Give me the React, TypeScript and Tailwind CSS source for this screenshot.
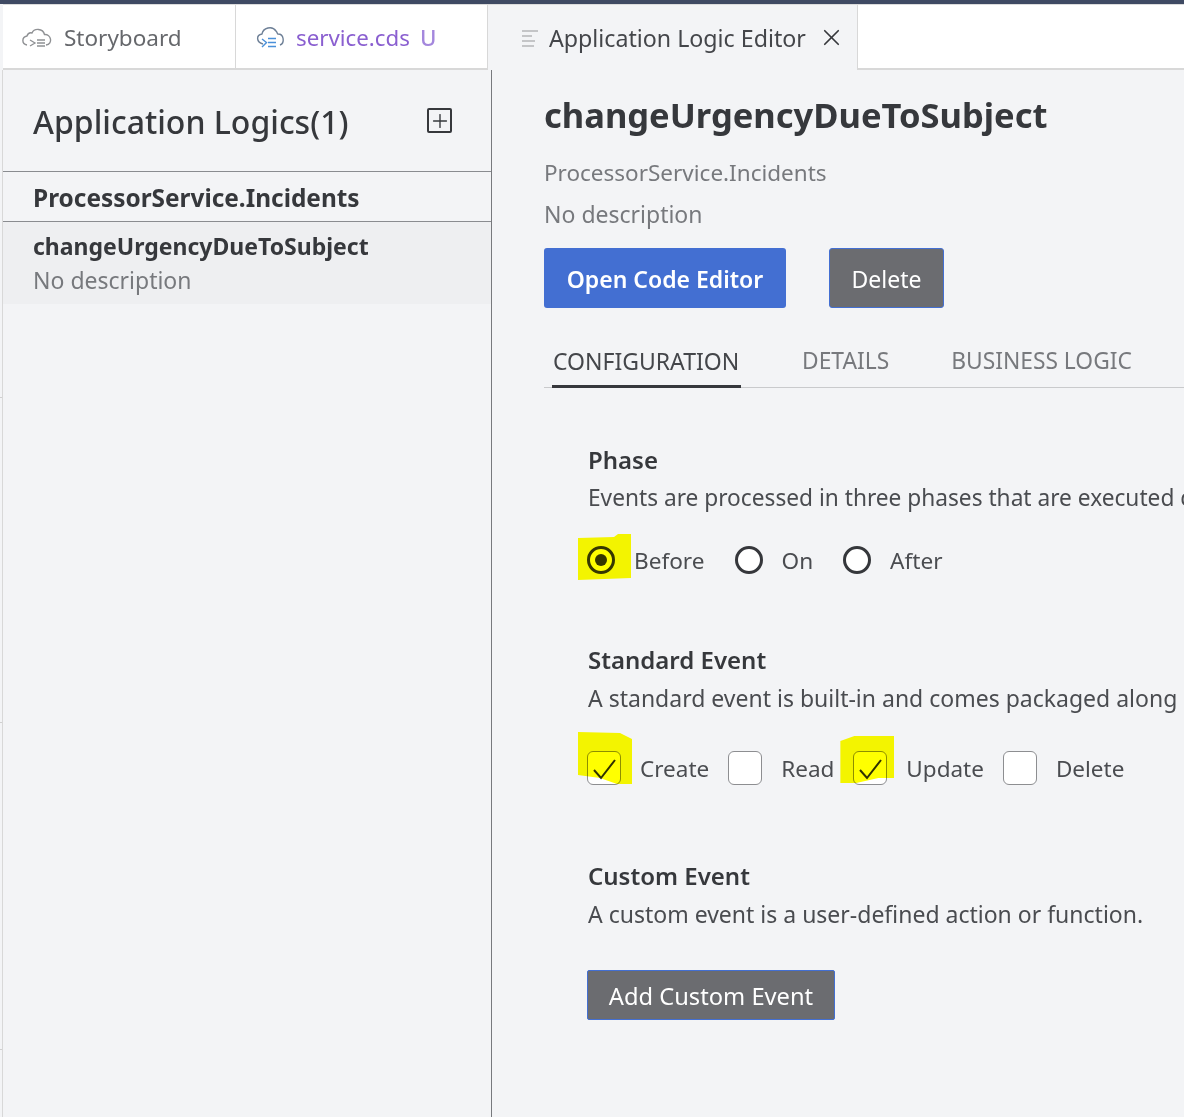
import { Plus, X } from "lucide-react";

const font = "font-['Noto_Sans','Open_Sans',sans-serif]";

/* ───────── Tab icons ───────── */
const StoryboardIcon = () => (
    <svg width="32" height="24" viewBox="0 0 32 24" fill="none" stroke="#8f9194">
        <path
            d="M6 20 C0.5 19 0.5 12 6 11 C7 8 9 7.5 11 8 C13 3 22 3 23.5 9.5 C30 9 32.5 19 25 20"
            strokeWidth="1.4"
        />
        <path d="M9 15 L14 18 L9 21" strokeWidth="1.3" />
        <path d="M16 15 H24 M16 18 H24 M16 21 H24" strokeWidth="1.5" />
    </svg>
);

const ServiceIcon = () => (
    <svg width="32" height="24" viewBox="0 0 32 24" fill="none">
        <path
            d="M7 19 C0 17 0 10 6 9 C7 3 16 0 20 6 C21.5 7.5 21 8.5 22 9 C28 9 29 18 24 20"
            stroke="#6d7f96"
            strokeWidth="1.4"
        />
        <path d="M6 14 L10.5 17.5 L6 22" stroke="#4a90d9" strokeWidth="1.4" />
        <path d="M12 13.5 H20 M12 17.5 H20 M12 21.5 H20" stroke="#4a90d9" strokeWidth="1.6" />
    </svg>
);

const LinesIcon = () => (
    <svg width="18" height="18" viewBox="0 0 18 18" fill="none" stroke="#c4c5c7" strokeWidth="2">
        <path d="M1 2 H17 M1 7 H11 M1 12 H14 M1 17 H13" />
    </svg>
);

/* ───────── Form controls ───────── */
const Radio = ({ label, checked, highlight }: { label: string; checked?: boolean; highlight?: boolean }) => (
    <div className="relative flex items-center gap-[19px]">
        {highlight && (
            <span className="absolute left-[-9px] top-[-12px] z-10 h-[46px] w-[53px] bg-[#ffff00] mix-blend-multiply [clip-path:polygon(0_4px,36px_3px,40px_0,100%_0,100%_44px,0_100%)]" />
        )}
        <span className="flex h-[28px] w-[28px] items-center justify-center rounded-full border-[3px] border-[#35373b] bg-white">
            {checked && <span className="h-[12px] w-[12px] rounded-full bg-[#35373b]" />}
        </span>
        <span className="pt-[2px] text-[22.6px] leading-[26px] text-[#4a4c50]">{label}</span>
    </div>
);

const Check = ({ label, checked, mark }: { label: string; checked?: boolean; mark?: "left" | "right" }) => (
    <div className="relative flex items-center gap-[19px]">
        {mark === "left" && (
            <span className="absolute left-[-9px] top-[-19px] z-10 h-[52px] w-[54px] bg-[#ffff00] mix-blend-multiply [clip-path:polygon(0_0,42px_1px,100%_7px,100%_100%,39px_100%,22px_46px,0_43px)]" />
        )}
        {mark === "right" && (
            <span className="absolute left-[-13px] top-[-15px] z-10 h-[47px] w-[54px] bg-[#ffff00] mix-blend-multiply [clip-path:polygon(0_5px,14px_0,100%_0,100%_42px,38px_42px,16px_100%,0_100%)]" />
        )}
        <span className="flex h-[34px] w-[34px] items-center justify-center rounded-[6px] border border-[#8d8e91] bg-white">
            {checked && (
                <svg width="26" height="26" viewBox="0 0 26 26" fill="none" stroke="#2f3135" strokeWidth="2">
                    <path d="M3 15 L10 23 L24 5" />
                </svg>
            )}
        </span>
        <span className="pt-[2px] text-[22.5px] leading-[32px] text-[#4a4c50]">{label}</span>
    </div>
);

const SectionText = ({ title, desc, tight }: { title: string; desc: string; tight?: boolean }) => (
    <div>
        <h3 className="text-[24px] font-semibold leading-[34px] text-[#36383c]">{title}</h3>
        <p
            className={
                tight
                    ? "mt-[4px] whitespace-nowrap text-[22.7px] leading-[34px] text-[#4a4c50]"
                    : "mt-[4px] whitespace-nowrap text-[23px] leading-[34px] text-[#4a4c50]"
            }
        >
            {desc}
        </p>
    </div>
);

export default function App() {
    return (
        <div className={`${font} relative h-[1117px] w-[1184px] overflow-hidden bg-[#f3f4f6]`}>
            <div className="h-1 bg-[#3f4a63]" />

            {/* Tab strip */}
            <div className="ml-[3px] flex h-[66px] border-t border-[#dcdcdc]">
                <div className="flex w-[233px] items-center gap-[11px] border-r border-b-2 border-[#d8d8d8] bg-white pl-[18px] text-[22.5px] text-[#66686c]">
                    <StoryboardIcon />
                    <span className="pt-[2px]">Storyboard</span>
                </div>
                <div className="flex w-[252px] items-center gap-[8px] border-r border-b-2 border-[#d8d8d8] bg-white pl-[20px] text-[22.3px] text-[#8a5fd0]">
                    <ServiceIcon />
                    <span className="pt-[2px]">service.cds</span>
                    <span className="ml-[2px] pt-[2px] font-medium text-[#a487dd]">U</span>
                </div>
                <div className="flex w-[370px] items-center border-r border-[#d8d8d8] pl-[33px] text-[23.2px] text-[#44464a]">
                    <LinesIcon />
                    <span className="ml-[10px] pt-[2px]">Application Logic Editor</span>
                    <X size={27} strokeWidth={1.5} className="ml-[12px] text-[#36383c]" />
                </div>
                <div className="flex-1 border-b-2 border-[#d8d8d8] bg-white" />
            </div>

            <div className="flex h-[1047px]">
                {/* Application logics list */}
                <aside className="ml-[2px] w-[490px] shrink-0 border-r border-l border-[#77797d] border-l-[#d8d8d8]">
                    <div className="flex h-[102px] items-start justify-between border-b border-[#8a8c90] pr-[39px] pl-[30px]">
                        <h2 className="mt-[29px] text-[32px] leading-[46px] font-medium text-[#36383c]">
                            Application Logics(1)
                        </h2>
                        <span className="mt-[38px] flex h-[25px] w-[25px] items-center justify-center rounded-[2px] border-2 border-[#36383c]">
                            <Plus size={22} strokeWidth={1.5} className="shrink-0 text-[#36383c]" />
                        </span>
                    </div>
                    <div className="flex h-[50px] items-center border-b border-[#8a8c90] pt-[3px] pl-[30px] text-[24.4px] font-bold text-[#36383c]">
                        ProcessorService.Incidents
                    </div>
                    <div className="h-[82px] bg-[#eeeff1] pt-[7px] pl-[30px]">
                        <div className="text-[23px] leading-[34px] font-bold text-[#36383c]">
                            changeUrgencyDueToSubject
                        </div>
                        <div className="text-[23px] leading-[34px] text-[#77797d]">No description</div>
                    </div>
                </aside>

                {/* Logic detail */}
                <main className="min-w-0 flex-1 overflow-hidden pl-[52px]">
                    <h1 className="mt-[20px] text-[34.5px] leading-[50px] font-bold whitespace-nowrap text-[#36383c]">
                        changeUrgencyDueToSubject
                    </h1>
                    <p className="mt-[16px] text-[22.5px] leading-[34px] text-[#77797d]">ProcessorService.Incidents</p>
                    <p className="mt-[7px] text-[23px] leading-[34px] text-[#77797d]">No description</p>

                    <div className="mt-[17px] flex gap-[43px]">
                        <button className="h-[60px] w-[242px] rounded-[3px] bg-[#436fd2] pt-[2px] text-[23px] font-semibold text-white">
                            Open Code Editor
                        </button>
                        <button className="h-[60px] w-[115px] rounded-[3px] border border-[#436fd2] bg-[#6b6c70] pt-[2px] text-[23px] text-white">
                            Delete
                        </button>
                    </div>

                    {/* Tabs */}
                    <div className="mt-[20px] flex h-[60px] border-b border-[#c9cacc] text-[22.8px]">
                        <div className="ml-[8px] flex h-[60px] w-[189px] items-center border-b-[3px] border-[#36383c] pt-[10px] pl-px text-[23px] text-[#44464a]">
                            CONFIGURATION
                        </div>
                        <div className="ml-[61px] flex h-[59px] items-center pt-[8px] text-[#77797d]">DETAILS</div>
                        <div className="ml-[62px] flex h-[59px] items-center pt-[8px] whitespace-nowrap text-[#77797d]">
                            BUSINESS LOGIC
                        </div>
                    </div>

                    <div className="pl-[44px]">
                        <div className="mt-[55px]">
                            <SectionText title="Phase" desc="Events are processed in three phases that are executed c" tight />
                            <div className="mt-[31px] -ml-px flex gap-[30px]">
                                <Radio label="Before" checked highlight />
                                <Radio label="On" />
                                <Radio label="After" />
                            </div>
                        </div>

                        <div className="mt-[69px]">
                            <SectionText
                                title="Standard Event"
                                desc="A standard event is built-in and comes packaged along"
                            />
                            <div className="mt-[36px] -ml-px flex gap-[19px]">
                                <Check label="Create" checked mark="left" />
                                <Check label="Read" />
                                <Check label="Update" checked mark="right" />
                                <Check label="Delete" />
                            </div>
                        </div>

                        <div className="mt-[74px]">
                            <SectionText
                                title="Custom Event"
                                desc="A custom event is a user-defined action or function."
                            />
                            <button className="mt-[39px] -ml-px h-[50px] w-[248px] rounded-[2px] border border-[#436fd2] bg-[#6b6c70] pt-[3px] text-[23.7px] text-white">
                                Add Custom Event
                            </button>
                        </div>
                    </div>
                </main>
            </div>

            {/* Ruler ticks on the window edge */}
            <span className="absolute top-[397px] left-0 h-px w-[2px] bg-[#d0d0d0]" />
            <span className="absolute top-[722px] left-0 h-px w-[2px] bg-[#d0d0d0]" />
            <span className="absolute top-[1049px] left-0 h-px w-[2px] bg-[#d0d0d0]" />
        </div>
    );
}
